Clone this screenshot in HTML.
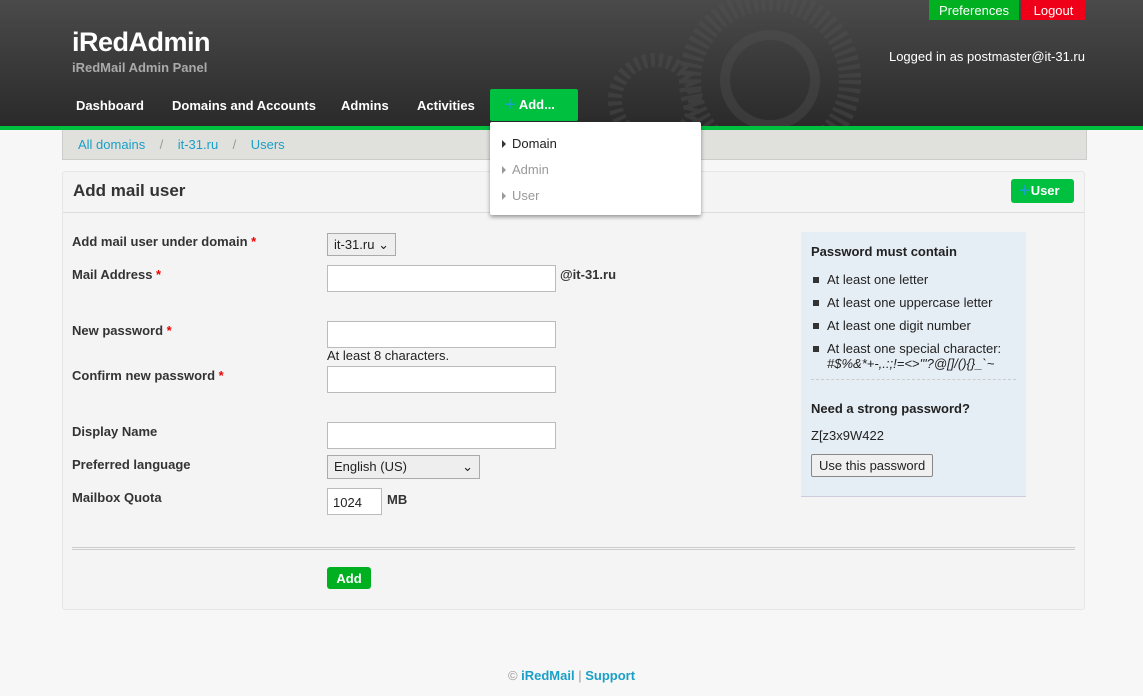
<!DOCTYPE html>
<html><head><meta charset="utf-8"><style>
*{box-sizing:border-box;margin:0;padding:0}
body{width:1143px;height:696px;background:#f7f7f7;font-family:"Liberation Sans",sans-serif;font-size:13px;color:#222;position:relative;overflow:hidden}
.hdr{position:absolute;left:0;top:0;width:1143px;height:126px;background:linear-gradient(#4a4a4a,#2a2a2a)}
.gl{position:absolute;left:0;top:126px;width:1143px;height:4px;background:#00c040}
.abs{position:absolute}
.logo{left:72px;top:27px;color:#fff;font-size:27px;font-weight:bold;letter-spacing:-0.5px}
.sub{left:72px;top:60px;color:#aaa;font-size:13px;font-weight:bold}
.nav{top:98px;color:#fff;font-weight:bold;font-size:13px}
.addbtn{left:490px;top:89px;width:88px;height:32px;background:#00c040;border-radius:2px;color:#fff;font-weight:bold;padding:8px 0 0 14px}
.plus{color:#1aa0d0;font-size:20px;line-height:10px;vertical-align:-2px;font-weight:normal}
.pref{left:929px;top:0;width:90px;height:20px;background:#00b020;color:#fff;text-align:center;padding-top:3px}
.logout{left:1022px;top:0;width:63px;height:20px;background:#f00018;color:#fff;text-align:center;padding-top:3px}
.logged{right:58px;top:49px;color:#fff}
.bc{left:62px;top:130px;width:1025px;height:30px;background:#e0e0dc;border:1px solid #ccc;border-top:0;padding:7px 0 0 15px;color:#999}
.bc a{color:#1aa0c8;text-decoration:none}
.box{left:62px;top:171px;width:1023px;height:439px;background:#f4f4f4;border:1px solid #e6e6e6;border-radius:3px}
.bh{height:41px;border-bottom:1px solid #ddd;padding:9px 0 0 10px;font-size:17px;font-weight:bold;color:#333}
.ubtn{right:10px;top:7px;width:63px;height:24px;background:#00c040;border-radius:3px;color:#fff;font-weight:bold;padding:4px 0 0 8px;font-size:13px}
.lbl{left:72px;font-weight:bold;color:#333}
.req{color:#e00}
.inp{left:327px;width:229px;height:27px;background:#fff;border:1px solid #bbb}
.sel{background:#eee;border:1px solid #aaa;padding:3px 0 0 6px}
.side{left:801px;top:232px;width:225px;height:265px;background:#e6eef5;border-bottom:1px solid #ccd;padding:12px 10px}
.side ul{list-style:none;margin-top:13px}
.side li{position:relative;padding-left:16px;margin-bottom:8px;line-height:15px}
.side li:before{content:"";position:absolute;left:2px;top:5px;width:6px;height:6px;background:#333}
.dd{left:490px;top:122px;width:211px;height:93px;background:#fff;box-shadow:0 2px 4px rgba(0,0,0,.4);border-radius:2px}
.dd div{position:absolute;left:12px}
.tri{display:inline-block;border-left:4px solid #333;border-top:4px solid transparent;border-bottom:4px solid transparent;margin-right:6px}
</style></head><body>
<div class="hdr"></div>
<svg class="abs" style="left:560px;top:0" width="400" height="126"><g fill="none" stroke="#555" opacity=".35"><circle cx="210" cy="80" r="80" stroke-width="22" stroke-dasharray="4 4"/><circle cx="210" cy="80" r="45" stroke-width="10"/><circle cx="95" cy="100" r="40" stroke-width="14" stroke-dasharray="4 4"/></g></svg>
<div class="gl"></div>
<div class="abs logo">iRedAdmin</div>
<div class="abs sub">iRedMail Admin Panel</div>
<div class="abs nav" style="left:76px">Dashboard</div>
<div class="abs nav" style="left:172px">Domains and Accounts</div>
<div class="abs nav" style="left:341px">Admins</div>
<div class="abs nav" style="left:417px">Activities</div>
<div class="abs addbtn"><span class="plus">+</span> Add...</div>
<div class="abs pref">Preferences</div>
<div class="abs logout">Logout</div>
<div class="abs logged">Logged in as postmaster@it-31.ru</div>
<div class="abs bc"><a>All domains</a> &nbsp;&nbsp; / &nbsp;&nbsp; <a>it-31.ru</a> &nbsp;&nbsp; / &nbsp;&nbsp; <a>Users</a></div>
<div class="abs box"><div class="bh">Add mail user</div><div class="abs ubtn"><span class="plus">+</span>User</div>
<div class="abs" style="left:9px;top:375px;width:1003px;height:3px;border-top:1px solid #ccc;border-bottom:1px solid #ccc"></div></div>
<div class="abs lbl" style="top:234px">Add mail user under domain <span class="req">*</span></div>
<div class="abs sel" style="left:327px;top:233px;width:69px;height:23px">it-31.ru ⌄</div>
<div class="abs lbl" style="top:267px">Mail Address <span class="req">*</span></div>
<div class="abs inp" style="top:265px"></div><div class="abs" style="left:560px;top:267px;font-weight:bold;color:#333">@it-31.ru</div>
<div class="abs lbl" style="top:323px">New password <span class="req">*</span></div>
<div class="abs inp" style="top:321px"></div>
<div class="abs" style="left:327px;top:348px">At least 8 characters.</div>
<div class="abs lbl" style="top:368px">Confirm new password <span class="req">*</span></div>
<div class="abs inp" style="top:366px"></div>
<div class="abs lbl" style="top:424px">Display Name</div>
<div class="abs inp" style="top:422px"></div>
<div class="abs lbl" style="top:457px">Preferred language</div>
<div class="abs sel" style="left:327px;top:455px;width:153px;height:24px">English (US)<span style="position:absolute;right:6px">⌄</span></div>
<div class="abs lbl" style="top:490px">Mailbox Quota</div>
<div class="abs inp" style="top:488px;width:55px;padding:6px 0 0 5px">1024</div>
<div class="abs" style="left:387px;top:492px;font-weight:bold;color:#333">MB</div>
<div class="abs" style="left:327px;top:567px;width:44px;height:22px;background:#00b020;border-radius:3px;color:#fff;font-weight:bold;text-align:center;padding-top:4px">Add</div>
<div class="abs side"><div style="font-weight:bold">Password must contain</div>
<ul><li>At least one letter</li><li>At least one uppercase letter</li><li>At least one digit number</li><li>At least one special character:<br><i>#$%&amp;*+-,.:;!=&lt;&gt;'"?@[]/(){}_`~</i></li></ul>
<div style="border-top:1px dashed #ccc;margin-top:8px;padding-top:21px;font-weight:bold">Need a strong password?</div>
<div style="margin-top:12px">Z[z3x9W422</div>
<div style="margin-top:11px;display:inline-block;border:1px solid #888;border-radius:2px;background:#f0f0f0;padding:3px 7px">Use this password</div></div>
<div class="abs dd"><div style="top:14px"><span class="tri"></span>Domain</div><div style="top:40px;color:#999"><span class="tri" style="border-left-color:#999"></span>Admin</div><div style="top:66px;color:#999"><span class="tri" style="border-left-color:#999"></span>User</div></div>
<div class="abs" style="left:0;width:1143px;top:668px;text-align:center;color:#999">© <b style="color:#1aa0c8">iRedMail</b> | <b style="color:#1aa0c8">Support</b></div>
</body></html>
